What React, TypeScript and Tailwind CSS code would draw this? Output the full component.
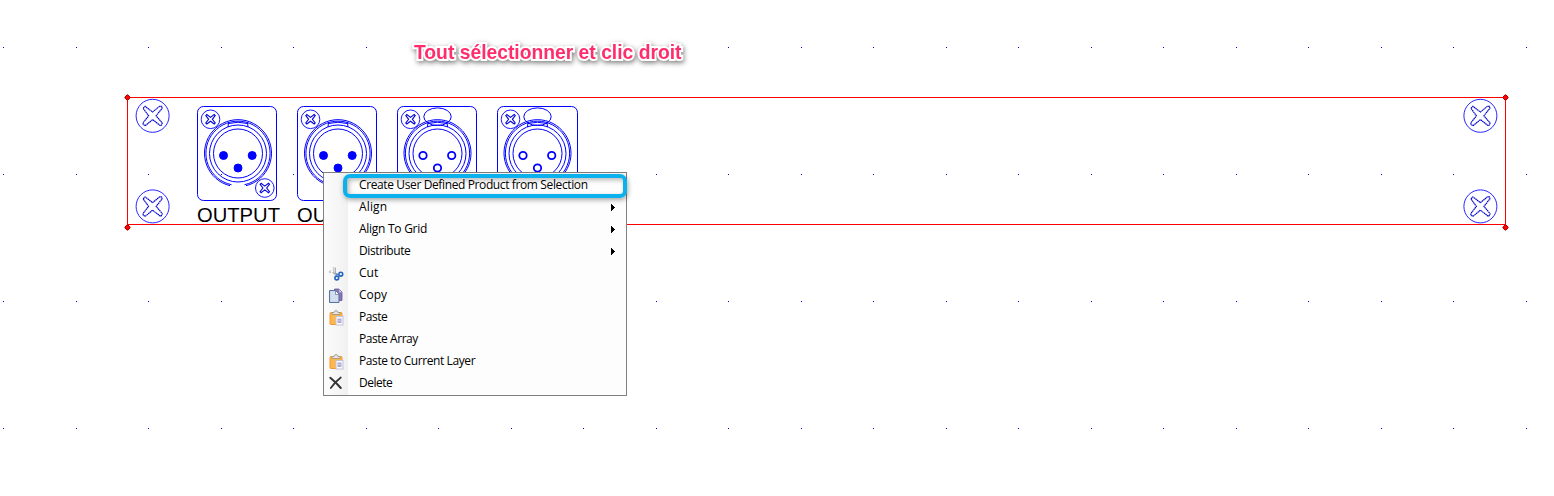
import React from "react";

const COLS = Array.from({ length: 22 }, (_, i) => Math.round(3 + i * 72.52));
const ROWS = [47, 174, 301, 428];

const CROSS =
  "M-9.5 -7.5 L-7.5 -9.5 L0 -3.8 L7 -9.5 L9 -9.5 L9.5 -7.5 L3.5 0 L9.5 7 L9.5 8.5 L8 10 L0 3.8 L-7.5 10 L-9.5 8.5 L-9.5 7 L-4 0 Z";

function Screw({ x, y }: { x: number; y: number }) {
  return (
    <g transform={`translate(${x} ${y})`}>
      <circle r="16.5" strokeOpacity=".85" />
      <path d={CROSS} stroke="#0000d0" strokeWidth="1.15" strokeDasharray="1.6 .4" />
    </g>
  );
}

function SmallScrew({ x, y }: { x: number; y: number }) {
  return (
    <g transform={`translate(${x} ${y})`}>
      <circle r="9.3" strokeOpacity=".9" />
      <path
        d="M-4.7 -3.7 L-3.7 -4.7 L0 -1.9 L3.7 -4.7 L4.7 -3.7 L1.9 0 L4.7 3.7 L3.7 4.7 L0 1.9 L-3.7 4.7 L-4.7 3.7 L-1.9 0 Z"
        stroke="#0000d8"
        strokeWidth="1.1"
      />
    </g>
  );
}

function Connector({ x, female = false }: { x: number; female?: boolean }) {
  const pins = [[26, 49], [54.7, 49], [40.5, 61.5]];
  return (
    <g transform={`translate(${x} 106.5)`}>
      <rect width={x > 490 ? 80 : 79} height="94" rx="6" />
      <SmallScrew x={13} y={12.8} />
      <SmallScrew x={67.3} y={81.5} />
      <g transform={female ? "translate(-.5 0)" : undefined}>
        <path d="M32.5 79.2 A33.5 33.5 0 1 1 48.5 79.2" />
        <path d="M34 78.2 A32.1 32.1 0 1 1 47 78.2" />
        <circle cx="40.5" cy="47" r="28.5" />
        <circle cx="40.5" cy="47" r="24.5" />
        <path d="M31 15.5 L30.5 20.5 M50 15.5 L50.5 20.5 M31 17 Q40.5 14.5 50 17" />
        {pins.map(([cx, cy]) => (
          <circle key={cx} cx={cx} cy={cy} r={female ? 3.7 : 4} fill={female ? "white" : "#00f"} strokeWidth={female ? 1.8 : 1} />
        ))}
      </g>
      {female && <ellipse cx="40" cy="10.2" rx="13.7" ry="8.8" />}
    </g>
  );
}

function Drawing() {
  return (
    <svg className="block h-full w-full" viewBox="0 0 1554 496" fill="none" stroke="#00f" strokeWidth="1">
      <g fill="#0000d0" stroke="none" shapeRendering="crispEdges">
        {ROWS.map((y) => COLS.map((x) => <rect key={`${x}-${y}`} x={x} y={y} width="1" height="1" />))}
      </g>
      <g stroke="none" fill="#000" fontFamily="Liberation Sans, Arial, sans-serif" fontSize="20.2">
        <text x="197" y="221.5">OUTPUT</text>
        <text x="297" y="221.5">OUTPUT</text>
      </g>
      <Connector x={197.5} />
      <Connector x={297.5} />
      <Connector x={397.5} female />
      <Connector x={497.5} female />
      <g>
        <Screw x={152.6} y={115.8} />
        <Screw x={152.6} y={206.4} />
        <Screw x={1480.4} y={115.8} />
        <Screw x={1480.4} y={206.4} />
      </g>
      <path d="M127.5 227 V97.5 H1505.5 V227 M127.5 224.5 H1505.5" stroke="#f00" shapeRendering="crispEdges" />
      {[[127.5, 97.5], [1505.5, 97.5], [127.5, 227.5], [1505.5, 227.5]].map(([x, y]) => (
        <path key={`${x}-${y}`} transform={`translate(${x} ${y})`} d="M-2.7 0 L-1.5 -1.7 L0 -2.7 L1.5 -1.7 L2.7 0 L1.5 1.7 L0 2.7 L-1.5 1.7 Z" fill="#f00" stroke="#b00000" />
      ))}
    </svg>
  );
}

function CutIcon() {
  return (
    <svg className="h-4 w-4" viewBox="0 0 16 16" fill="none">
      <path d="M3 4.5 L1 5.8 L3 7" stroke="#bbb" />
      <path d="M5.5 1 V7 L7 9" stroke="#d0d0d0" strokeWidth="1.3" />
      <path d="M7.3 1.5 V8" stroke="#aaa" strokeWidth="1.2" />
      <path d="M4.5 6.5 L9 8" stroke="#aaa" />
      <circle cx="12.8" cy="8.2" r="1.9" stroke="#2865bd" strokeWidth="1.6" />
      <circle cx="8.8" cy="12" r="1.9" stroke="#2865bd" strokeWidth="1.6" />
      <path d="M7.5 8 L10.3 8.3 M8.3 8 V10" stroke="#4f80c8" strokeWidth="1.3" />
    </svg>
  );
}

function CopyIcon() {
  return (
    <svg className="h-4 w-4" viewBox="0 0 16 16">
      <path d="M6.5 1 H11 L14 4 V12.5 H6.5 Z" fill="#8876b4" stroke="#67569d" strokeWidth=".8" />
      <path d="M11 1 V4.5 H14" fill="#d9d2ed" stroke="#9689bd" strokeWidth=".7" />
      <path d="M1.5 2.5 H7.5 L11 6 V14.5 H1.5 Z" fill="#c3d1e6" stroke="#5872a5" />
      <path d="M2.5 3.5 H7 V7 H10 V13.5 H2.5 Z" fill="#d4dfee" />
      <path d="M7.5 3 V6.5 H10.7" fill="#fff" stroke="#5872a5" strokeWidth=".7" />
    </svg>
  );
}

function PasteIcon() {
  return (
    <svg className="h-4 w-4" viewBox="0 0 16 16">
      <rect x="2" y="2.5" width="12" height="12" rx="1" fill="#ffb64c" stroke="#f39a2e" />
      <path d="M4 4.5 V2.5 H6 Q6 .6 8 .6 T10 2.5 H12 V4.5 Z" fill="#e8e4da" stroke="#969083" strokeWidth=".8" />
      <rect x="8" y="6.5" width="7" height="8.5" fill="#fbfbff" stroke="#c4c4d8" />
      <rect x="9.5" y="8.5" width="4" height="4.5" fill="#b0acd2" />
      <path d="M9.5 10.5 H13.5" stroke="#d8d6ec" strokeWidth=".6" />
    </svg>
  );
}

function DeleteIcon() {
  return (
    <svg className="h-4 w-4" viewBox="0 0 16 16" fill="none" stroke="#333" strokeLinecap="round">
      <path d="M2.3 1.8 Q7.5 6 12.8 12" strokeWidth="2" />
      <path d="M12.8 1.5 Q7 6 2.8 12" strokeWidth="1.7" />
    </svg>
  );
}

type Item = { label: string; spacing: string; icon?: () => React.ReactElement; submenu?: boolean };

const ITEMS: Item[] = [
  { label: "Create User Defined Product from Selection", spacing: "tracking-[-0.38px]" },
  { label: "Align", spacing: "tracking-[0.15px]", submenu: true },
  { label: "Align To Grid", spacing: "tracking-[-0.27px]", submenu: true },
  { label: "Distribute", spacing: "tracking-[-0.4px]", submenu: true },
  { label: "Cut", spacing: "tracking-[0px]", icon: CutIcon },
  { label: "Copy", spacing: "tracking-[0px]", icon: CopyIcon },
  { label: "Paste", spacing: "tracking-[-0.45px]", icon: PasteIcon },
  { label: "Paste Array", spacing: "tracking-[-0.45px]" },
  { label: "Paste to Current Layer", spacing: "tracking-[-0.41px]", icon: PasteIcon },
  { label: "Delete", spacing: "tracking-[-0.5px]", icon: DeleteIcon },
];

function ContextMenu() {
  return (
    <div className="absolute left-[323px] top-[172px] h-[224px] w-[304px] border border-[#808080] bg-[#fdfdfd] font-['Open_Sans','Noto_Sans',sans-serif] text-[12px] text-black">
      <ul className="h-full bg-linear-to-r from-[#fcfcfc] to-[#f1f1f1] bg-[length:24px_100%] bg-no-repeat pt-px">
        {ITEMS.map(({ label, spacing, icon: Icon, submenu }) => (
          <li key={label} className="flex h-[22px] items-center pr-[11px]">
            <span className="flex w-[35px] shrink-0 pl-1 pt-0.5">{Icon && <Icon />}</span>
            <span className={`whitespace-nowrap leading-[16px] ${spacing}`}>{label}</span>
            {submenu && (
              <svg className="ml-auto h-[7px] w-1" viewBox="0 0 4 7" shapeRendering="crispEdges">
                <path d="M0 0 L4 3.5 L0 7 Z" />
              </svg>
            )}
          </li>
        ))}
      </ul>
      <div className="absolute left-[19px] top-[1px] h-[24px] w-[284px] rounded-[7px] border-4 border-[#0bb1ed] shadow-[1px_2px_5px_rgba(0,0,0,0.35),inset_2px_2px_5px_rgba(0,0,0,0.28)]" />
    </div>
  );
}

export default function App() {
  return (
    <main className="relative h-[496px] w-[1554px] overflow-hidden bg-white">
      <Drawing />
      <h1 className="absolute left-[414px] top-[42px] whitespace-nowrap font-['Liberation_Sans',Arial,sans-serif] text-[19.3px] font-bold leading-[22px] text-[#ff2d6c] [filter:drop-shadow(1px_2px_2.5px_rgba(0,0,0,0.5))] [paint-order:stroke_fill] [-webkit-text-stroke:4px_white]">
        Tout sélectionner et clic droit
      </h1>
      <ContextMenu />
    </main>
  );
}
